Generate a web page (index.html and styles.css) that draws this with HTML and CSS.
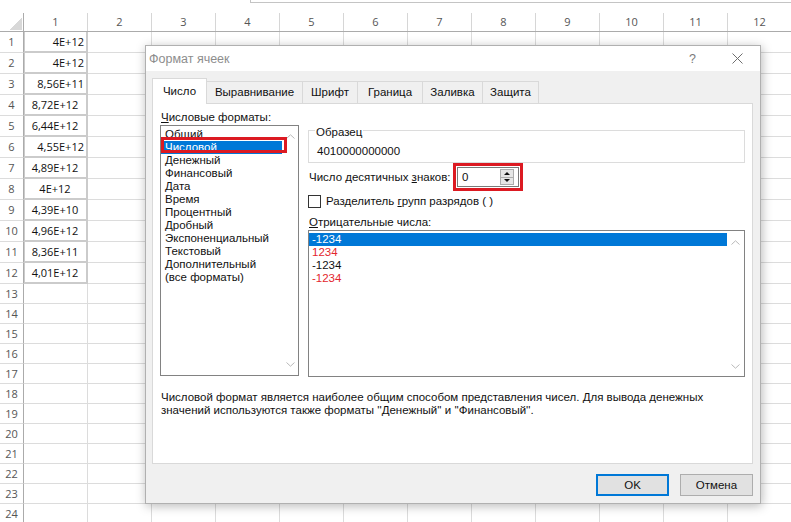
FILE: index.html
```html
<!DOCTYPE html>
<html lang="ru">
<head>
<meta charset="utf-8">
<title>Формат ячеек</title>
<link rel="stylesheet" href="styles.css">
</head>
<body>
<div class="sheet">
  <div class="topbar"><div class="fx"></div></div>
  <div class="hrow">
    <div class="corner"></div><div class="ch">1</div><div class="ch">2</div><div class="ch">3</div><div class="ch">4</div><div class="ch">5</div><div class="ch">6</div><div class="ch">7</div><div class="ch">8</div><div class="ch">9</div><div class="ch">10</div><div class="ch">11</div><div class="ch">12</div>
  </div>
  <div class="row"><div class="rh">1</div><div class="c v r">4E+12</div><div class="c"></div><div class="c"></div><div class="c"></div><div class="c"></div><div class="c"></div><div class="c"></div><div class="c"></div><div class="c"></div><div class="c"></div><div class="c"></div><div class="c"></div></div>
  <div class="row"><div class="rh">2</div><div class="c v r">4E+12</div><div class="c"></div><div class="c"></div><div class="c"></div><div class="c"></div><div class="c"></div><div class="c"></div><div class="c"></div><div class="c"></div><div class="c"></div><div class="c"></div><div class="c"></div></div>
  <div class="row"><div class="rh">3</div><div class="c v r">8,56E+11</div><div class="c"></div><div class="c"></div><div class="c"></div><div class="c"></div><div class="c"></div><div class="c"></div><div class="c"></div><div class="c"></div><div class="c"></div><div class="c"></div><div class="c"></div></div>
  <div class="row"><div class="rh">4</div><div class="c v m">8,72E+12</div><div class="c"></div><div class="c"></div><div class="c"></div><div class="c"></div><div class="c"></div><div class="c"></div><div class="c"></div><div class="c"></div><div class="c"></div><div class="c"></div><div class="c"></div></div>
  <div class="row"><div class="rh">5</div><div class="c v m">6,44E+12</div><div class="c"></div><div class="c"></div><div class="c"></div><div class="c"></div><div class="c"></div><div class="c"></div><div class="c"></div><div class="c"></div><div class="c"></div><div class="c"></div><div class="c"></div></div>
  <div class="row"><div class="rh">6</div><div class="c v r">4,55E+12</div><div class="c"></div><div class="c"></div><div class="c"></div><div class="c"></div><div class="c"></div><div class="c"></div><div class="c"></div><div class="c"></div><div class="c"></div><div class="c"></div><div class="c"></div></div>
  <div class="row"><div class="rh">7</div><div class="c v m">4,89E+12</div><div class="c"></div><div class="c"></div><div class="c"></div><div class="c"></div><div class="c"></div><div class="c"></div><div class="c"></div><div class="c"></div><div class="c"></div><div class="c"></div><div class="c"></div></div>
  <div class="row"><div class="rh">8</div><div class="c v m">4E+12</div><div class="c"></div><div class="c"></div><div class="c"></div><div class="c"></div><div class="c"></div><div class="c"></div><div class="c"></div><div class="c"></div><div class="c"></div><div class="c"></div><div class="c"></div></div>
  <div class="row"><div class="rh">9</div><div class="c v m">4,39E+10</div><div class="c"></div><div class="c"></div><div class="c"></div><div class="c"></div><div class="c"></div><div class="c"></div><div class="c"></div><div class="c"></div><div class="c"></div><div class="c"></div><div class="c"></div></div>
  <div class="row"><div class="rh">10</div><div class="c v m">4,96E+12</div><div class="c"></div><div class="c"></div><div class="c"></div><div class="c"></div><div class="c"></div><div class="c"></div><div class="c"></div><div class="c"></div><div class="c"></div><div class="c"></div><div class="c"></div></div>
  <div class="row"><div class="rh">11</div><div class="c v m">8,36E+11</div><div class="c"></div><div class="c"></div><div class="c"></div><div class="c"></div><div class="c"></div><div class="c"></div><div class="c"></div><div class="c"></div><div class="c"></div><div class="c"></div><div class="c"></div></div>
  <div class="row"><div class="rh">12</div><div class="c v m">4,01E+12</div><div class="c"></div><div class="c"></div><div class="c"></div><div class="c"></div><div class="c"></div><div class="c"></div><div class="c"></div><div class="c"></div><div class="c"></div><div class="c"></div><div class="c"></div></div>
  <div class="row s"><div class="rh">13</div><div class="c"></div><div class="c"></div><div class="c"></div><div class="c"></div><div class="c"></div><div class="c"></div><div class="c"></div><div class="c"></div><div class="c"></div><div class="c"></div><div class="c"></div><div class="c"></div></div>
  <div class="row s"><div class="rh">14</div><div class="c"></div><div class="c"></div><div class="c"></div><div class="c"></div><div class="c"></div><div class="c"></div><div class="c"></div><div class="c"></div><div class="c"></div><div class="c"></div><div class="c"></div><div class="c"></div></div>
  <div class="row s"><div class="rh">15</div><div class="c"></div><div class="c"></div><div class="c"></div><div class="c"></div><div class="c"></div><div class="c"></div><div class="c"></div><div class="c"></div><div class="c"></div><div class="c"></div><div class="c"></div><div class="c"></div></div>
  <div class="row s"><div class="rh">16</div><div class="c"></div><div class="c"></div><div class="c"></div><div class="c"></div><div class="c"></div><div class="c"></div><div class="c"></div><div class="c"></div><div class="c"></div><div class="c"></div><div class="c"></div><div class="c"></div></div>
  <div class="row s"><div class="rh">17</div><div class="c"></div><div class="c"></div><div class="c"></div><div class="c"></div><div class="c"></div><div class="c"></div><div class="c"></div><div class="c"></div><div class="c"></div><div class="c"></div><div class="c"></div><div class="c"></div></div>
  <div class="row s"><div class="rh">18</div><div class="c"></div><div class="c"></div><div class="c"></div><div class="c"></div><div class="c"></div><div class="c"></div><div class="c"></div><div class="c"></div><div class="c"></div><div class="c"></div><div class="c"></div><div class="c"></div></div>
  <div class="row s"><div class="rh">19</div><div class="c"></div><div class="c"></div><div class="c"></div><div class="c"></div><div class="c"></div><div class="c"></div><div class="c"></div><div class="c"></div><div class="c"></div><div class="c"></div><div class="c"></div><div class="c"></div></div>
  <div class="row s"><div class="rh">20</div><div class="c"></div><div class="c"></div><div class="c"></div><div class="c"></div><div class="c"></div><div class="c"></div><div class="c"></div><div class="c"></div><div class="c"></div><div class="c"></div><div class="c"></div><div class="c"></div></div>
  <div class="row s"><div class="rh">21</div><div class="c"></div><div class="c"></div><div class="c"></div><div class="c"></div><div class="c"></div><div class="c"></div><div class="c"></div><div class="c"></div><div class="c"></div><div class="c"></div><div class="c"></div><div class="c"></div></div>
  <div class="row s"><div class="rh">22</div><div class="c"></div><div class="c"></div><div class="c"></div><div class="c"></div><div class="c"></div><div class="c"></div><div class="c"></div><div class="c"></div><div class="c"></div><div class="c"></div><div class="c"></div><div class="c"></div></div>
  <div class="row s"><div class="rh">23</div><div class="c"></div><div class="c"></div><div class="c"></div><div class="c"></div><div class="c"></div><div class="c"></div><div class="c"></div><div class="c"></div><div class="c"></div><div class="c"></div><div class="c"></div><div class="c"></div></div>
  <div class="row s"><div class="rh">24</div><div class="c"></div><div class="c"></div><div class="c"></div><div class="c"></div><div class="c"></div><div class="c"></div><div class="c"></div><div class="c"></div><div class="c"></div><div class="c"></div><div class="c"></div><div class="c"></div></div>
</div>

<div class="dialog">
  <div class="titlebar">
    <span class="title">Формат ячеек</span>
    <span class="help">?</span>
    <svg class="close" width="11" height="11" viewBox="0 0 11 11"><path d="M0.5 0.5 L10.5 10.5 M10.5 0.5 L0.5 10.5" stroke="#6e6e6e" stroke-width="1" fill="none"/></svg>
  </div>
  <div class="dbody">
    <div class="tabs">
      <div class="tab active" style="width:55px">Число</div>
      <div class="tab" style="width:96px">Выравнивание</div>
      <div class="tab" style="width:55px">Шрифт</div>
      <div class="tab" style="width:65px">Граница</div>
      <div class="tab" style="width:60px">Заливка</div>
      <div class="tab" style="width:56px">Защита</div>
    </div>
    <div class="panel">
      <div class="cols">
        <div class="leftcol">
          <div class="lbl"><u>Ч</u>исловые форматы:</div>
          <div class="list fmt">
            <div class="items">
              <div class="it">Общий</div>
              <div class="it sel">Числовой</div>
              <div class="it">Денежный</div>
              <div class="it">Финансовый</div>
              <div class="it">Дата</div>
              <div class="it">Время</div>
              <div class="it">Процентный</div>
              <div class="it">Дробный</div>
              <div class="it">Экспоненциальный</div>
              <div class="it">Текстовый</div>
              <div class="it">Дополнительный</div>
              <div class="it">(все форматы)</div>
            </div>
            <div class="sb">
              <svg width="9" height="5" viewBox="0 0 9 5"><path d="M0.5 4.5 L4.5 0.8 L8.5 4.5" stroke="#b9b9b9" fill="none"/></svg>
              <svg width="9" height="5" viewBox="0 0 9 5"><path d="M0.5 0.5 L4.5 4.2 L8.5 0.5" stroke="#b9b9b9" fill="none"/></svg>
            </div>
            <div class="mark-sel"></div>
          </div>
        </div>
        <div class="rightcol">
          <div class="group">
            <div class="legend">Образец</div>
            <div class="sample">4010000000000</div>
          </div>
          <div class="decrow">
            <div class="declbl">Число десятичных <u>з</u>наков:</div>
            <div class="mark-spin">
              <div class="spin">
                <span class="spin-val">0</span>
                <span class="spin-btns"><span class="sbtn"><i class="up"></i></span><span class="sbtn"><i class="dn"></i></span></span>
              </div>
            </div>
          </div>
          <div class="chkrow"><span class="chk"></span><span>Разделитель <u>г</u>рупп разрядов ( )</span></div>
          <div class="lbl neglbl"><u>О</u>трицательные числа:</div>
          <div class="list neg">
            <div class="items">
              <div class="it sel">-1234</div>
              <div class="it red">1234</div>
              <div class="it">-1234</div>
              <div class="it red">-1234</div>
            </div>
            <div class="sb">
              <svg width="9" height="5" viewBox="0 0 9 5"><path d="M0.5 4.5 L4.5 0.8 L8.5 4.5" stroke="#b9b9b9" fill="none"/></svg>
              <svg width="9" height="5" viewBox="0 0 9 5"><path d="M0.5 0.5 L4.5 4.2 L8.5 0.5" stroke="#b9b9b9" fill="none"/></svg>
            </div>
          </div>
        </div>
      </div>
      <div class="desc">Числовой формат является наиболее общим способом представления чисел. Для вывода денежных<br>значений используются также форматы ''Денежный'' и ''Финансовый''.</div>
    </div>
    <div class="buttons">
      <button class="btn ok">OK</button>
      <button class="btn">Отмена</button>
    </div>
  </div>
</div>
</body>
</html>
```

FILE: styles.css
```css
html, body {
  margin: 0;
  padding: 0;
}
body {
  width: 791px;
  height: 522px;
  overflow: hidden;
  background: #fff;
  font-family: "Open Sans", "Noto Sans", sans-serif;
  font-size: 11px;
  color: #1a1a1a;
}

/* ---------- spreadsheet ---------- */
.sheet {
  width: 792px;
}
.topbar {
  height: 13px;
  display: flex;
  align-items: flex-start;
}
.topbar .fx {
  margin-left: 250px;
  flex: 1;
  height: 3px;
  box-sizing: border-box;
  border-left: 1px solid #c4c4c4;
  border-bottom: 1px solid #c4c4c4;
}
.hrow, .row {
  display: grid;
  grid-template-columns: 24px repeat(12, 64px);
}
.hrow {
  height: 19px;
  box-sizing: border-box;
  border-bottom: 1px solid #ababab;
}
.corner {
  border-right: 1px solid #ababab;
  background: linear-gradient(to bottom right, transparent 50%, #d8d8d8 50%) no-repeat right 1px bottom 1px / 12px 12px;
}
.ch {
  border-right: 1px solid #d6d6d6;
  text-align: center;
  line-height: 18px;
  color: #555;
}
.row {
  height: 21px;
}
.row.s {
  height: 20px;
}
.rh, .c {
  box-sizing: border-box;
  border-bottom: 1px solid #dcdcdc;
}
.rh {
  border-right: 1px solid #ababab;
  text-align: center;
  color: #555;
  line-height: 20px;
}
.row.s .rh {
  line-height: 19px;
}
.c {
  border-right: 1px solid #dcdcdc;
}
.c.v {
  border-right: 2px solid #cbcbcb;
  border-bottom: 2px solid #cbcbcb;
  box-shadow: inset 1px 0 0 #cbcbcb;
  line-height: 19px;
  color: #111;
}
.c.r {
  text-align: right;
  padding-right: 2px;
}
.c.m {
  text-align: center;
}

/* ---------- dialog ---------- */
.dialog {
  position: absolute;
  left: 145px;
  top: 45px;
  width: 616px;
  height: 459px;
  box-sizing: border-box;
  border: 1px solid #b0b0b0;
  background: #f0f0f0;
  box-shadow: 1px 2px 10px rgba(0, 0, 0, 0.28);
  display: flex;
  flex-direction: column;
  font-family: "Liberation Sans", Arial, sans-serif;
  font-size: 11.5px;
  color: #111;
}
.titlebar {
  height: 25px;
  background: #fff;
  display: flex;
  align-items: center;
  padding-left: 3px;
}
.title {
  font-size: 12.5px;
  color: #8d8d8d;
}
.help {
  margin-left: auto;
  font-size: 12.5px;
  color: #7a7a7a;
}
.close {
  margin-left: 36px;
  margin-right: 17px;
}
.dbody {
  padding: 7px 7px 0 6px;
}
.tabs {
  display: flex;
  align-items: flex-end;
  height: 25px;
  position: relative;
  z-index: 1;
}
.tab {
  box-sizing: border-box;
  height: 22px;
  border: 1px solid #d9d9d9;
  border-left: none;
  border-bottom: none;
  background: #f0f0f0;
  text-align: center;
  line-height: 21px;
}
.tab.active {
  height: 26px;
  margin-bottom: -1px;
  border-left: 1px solid #d9d9d9;
  background: #fff;
  line-height: 25px;
}
.panel {
  box-sizing: border-box;
  height: 361px;
  background: #fff;
  border: 1px solid #d9d9d9;
  padding: 6px 7px 0 7px;
}
.cols {
  display: flex;
  gap: 9px;
  align-items: flex-start;
}
.leftcol {
  width: 139px;
}
.lbl {
  line-height: 14px;
  padding-left: 1px;
}
.list {
  position: relative;
  box-sizing: border-box;
  border: 1px solid #828282;
  background: #fff;
  display: flex;
  margin-top: 1px;
}
.list.fmt {
  height: 251px;
}
.list .items {
  flex: 1;
}
.list.fmt .items {
  padding-top: 2px;
}
.list.neg .items {
  padding-top: 2px;
}
.it {
  line-height: 13px;
  padding-left: 4px;
  white-space: nowrap;
}
.list.neg .it {
  padding-left: 3px;
}
.it.sel {
  background: #0078d7;
  color: #fff;
}
.it.red {
  color: #e3262e;
}
.sb {
  width: 16px;
  display: flex;
  flex-direction: column;
  justify-content: space-between;
  align-items: center;
  padding: 8px 0;
}
.list.neg .sb {
  width: 17px;
  padding: 9px 0 7px;
}
.mark-sel {
  position: absolute;
  left: 0;
  top: 11px;
  width: 126px;
  height: 16px;
  box-sizing: border-box;
  border: 3px solid #dc1a22;
}
.rightcol {
  width: 437px;
}
.group {
  margin-top: 20px;
  border: 1px solid #dcdcdc;
  padding: 0 0 4px 8px;
}
.legend {
  width: fit-content;
  margin: -6px 0 0 -2px;
  padding: 0 1px;
  background: #fff;
  line-height: 14px;
}
.sample {
  margin-top: 5px;
  line-height: 14px;
}
.decrow {
  display: flex;
  align-items: center;
  height: 28px;
}
.declbl {
  width: 145px;
  box-sizing: border-box;
  padding-left: 1px;
  line-height: 14px;
}
.mark-spin {
  border: 3px solid #dc1a22;
  padding: 1px;
}
.spin {
  box-sizing: border-box;
  width: 62px;
  height: 20px;
  border: 1px solid #7a7a7a;
  display: flex;
  align-items: center;
  background: #fff;
}
.spin-val {
  flex: 1;
  padding-left: 4px;
  line-height: 18px;
}
.spin-btns {
  width: 14px;
  height: 16px;
  margin-right: 4px;
  display: flex;
  flex-direction: column;
}
.sbtn {
  flex: 1;
  box-sizing: border-box;
  border: 1px solid #adadad;
  background: #e6e6e6;
  display: flex;
  align-items: center;
  justify-content: center;
}
.sbtn + .sbtn {
  border-top: none;
}
.sbtn i {
  width: 0;
  height: 0;
  border-left: 3px solid transparent;
  border-right: 3px solid transparent;
}
.sbtn i.up {
  border-bottom: 3px solid #111;
}
.sbtn i.dn {
  border-top: 3px solid #111;
}
.chkrow {
  display: flex;
  align-items: center;
  height: 14px;
  margin-top: 3px;
  gap: 5px;
}
.chk {
  width: 13px;
  height: 13px;
  box-sizing: border-box;
  border: 1px solid #333;
  background: #fff;
}
.neglbl {
  margin-top: 7px;
}
.list.neg {
  height: 147px;
}
.desc {
  margin-top: 14px;
  padding-left: 1px;
  line-height: 13px;
  white-space: nowrap;
}
.buttons {
  display: flex;
  justify-content: flex-end;
  gap: 11px;
  margin-top: 10px;
}
.btn {
  box-sizing: border-box;
  width: 73px;
  height: 22px;
  padding: 0;
  font-family: inherit;
  font-size: 11.5px;
  color: #111;
  background: #e1e1e1;
  border: 1px solid #adadad;
}
.btn.ok {
  border: 2px solid #0078d7;
}
```
